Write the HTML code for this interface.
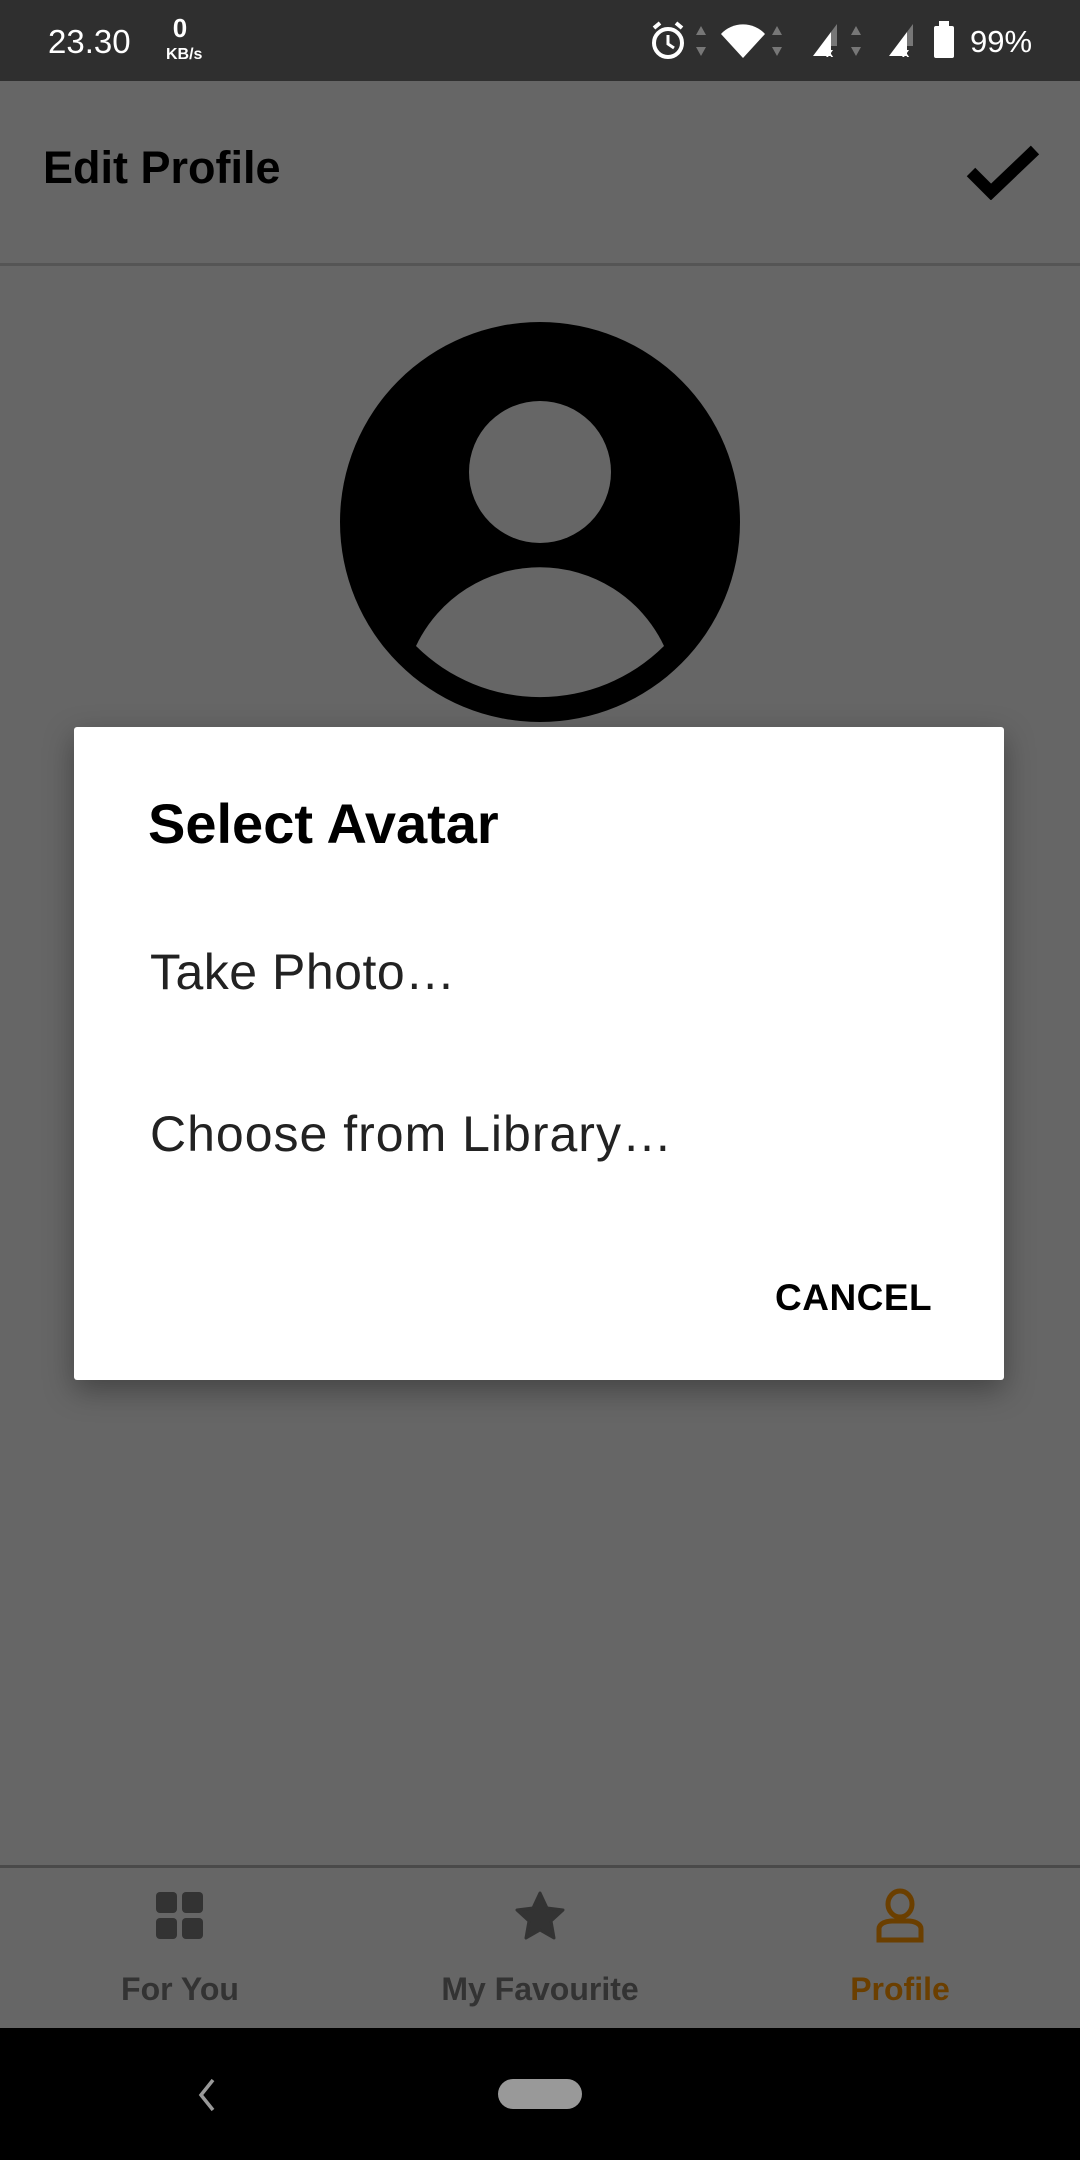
<!DOCTYPE html>
<html><head><meta charset="utf-8"><style>
*{margin:0;padding:0;box-sizing:border-box}
body{width:1080px;height:2160px;position:relative;background:#666;font-family:"Liberation Sans",sans-serif;overflow:hidden}
.abs{position:absolute}
</style></head><body>
<div class="abs" style="left:0;top:0;width:1080px;height:81px;background:#2f2f2f"></div>
<div class="abs" style="left:48px;top:22px;color:#fff;font-size:33px;line-height:40px">23.30</div>
<div class="abs" style="left:168px;top:14px;color:#fff;font-size:26px;font-weight:bold;line-height:28px;width:24px;text-align:center">0</div>
<div class="abs" style="left:166px;top:46px;color:#fff;font-size:16px;font-weight:bold;line-height:18px">KB/s</div>
<svg class="abs" style="left:645px;top:18px" width="400" height="46" viewBox="0 0 400 46">
 <circle cx="23" cy="25" r="14" fill="none" stroke="#fff" stroke-width="4"/>
 <path d="M23 17v9l6 4" stroke="#fff" stroke-width="3" fill="none"/>
 <path d="M9 10l6-5M37 10l-6-5" stroke="#fff" stroke-width="4"/>
 <path d="M56 8l-5 9h10zM56 38l-5-9h10z" fill="#777"/>
 <path d="M98 40L76 16a30 30 0 0 1 44 0z" fill="#fff"/>
 <path d="M132 8l-5 9h10zM132 38l-5-9h10z" fill="#777"/>
 <path d="M168 38L186 14v24z" fill="#fff"/><path d="M186 14v14h6V6z" fill="#777"/>
 <text x="181" y="39" fill="#fff" font-size="13" font-weight="bold" font-family="Liberation Sans">x</text>
 <path d="M211 8l-5 9h10zM211 38l-5-9h10z" fill="#777"/>
 <path d="M244 38L262 14v24z" fill="#fff"/><path d="M262 14v14h6V6z" fill="#777"/>
 <text x="257" y="39" fill="#fff" font-size="13" font-weight="bold" font-family="Liberation Sans">x</text>
 <rect x="289" y="8" width="20" height="32" rx="2" fill="#fff"/><rect x="294" y="3" width="10" height="6" fill="#fff"/>
</svg>
<div class="abs" style="left:970px;top:22px;color:#fff;font-size:31px;line-height:40px">99%</div>

<div class="abs" style="left:43px;top:140px;font-size:45px;font-weight:bold;color:#000;line-height:56px">Edit Profile</div>
<svg class="abs" style="left:965px;top:144px" width="76" height="56" viewBox="0 0 76 56"><path d="M6 28l20 20L70 6" stroke="#000" stroke-width="12" fill="none" stroke-linejoin="miter"/></svg>
<div class="abs" style="left:0;top:263px;width:1080px;height:3px;background:#555"></div>

<svg class="abs" style="left:338px;top:320px" width="404" height="404" viewBox="0 0 404 404">
 <circle cx="202" cy="202" r="200" fill="#000"/>
 <circle cx="202" cy="152" r="71" fill="#666"/>
 <path d="M78 326a137 137 0 0 1 248 0a176 176 0 0 1-248 0z" fill="#666"/>
</svg>

<div class="abs" style="left:74px;top:727px;width:930px;height:653px;background:#fff;border-radius:3px;box-shadow:0 10px 30px rgba(0,0,0,.35)"></div>
<div class="abs" style="left:148px;top:792px;font-size:56px;font-weight:bold;color:#000;line-height:64px">Select Avatar</div>
<div class="abs" style="left:150px;top:943px;font-size:50px;color:#222;line-height:58px;letter-spacing:0.5px">Take Photo…</div>
<div class="abs" style="left:150px;top:1105px;font-size:50px;color:#222;line-height:58px;letter-spacing:1px">Choose from Library…</div>
<div class="abs" style="left:775px;top:1276px;font-size:37px;font-weight:bold;color:#000;line-height:44px;letter-spacing:0.5px">CANCEL</div>

<div class="abs" style="left:0;top:1865px;width:1080px;height:3px;background:#4a4a4a"></div>
<svg class="abs" style="left:155px;top:1891px" width="50" height="50" viewBox="0 0 50 50"><g fill="#333"><rect x="1" y="1" width="21" height="21" rx="4"/><rect x="27" y="1" width="21" height="21" rx="4"/><rect x="1" y="27" width="21" height="21" rx="4"/><rect x="27" y="27" width="21" height="21" rx="4"/></g></svg>
<svg class="abs" style="left:514px;top:1891px" width="52" height="50" viewBox="0 0 52 50"><path d="M26 2l7 15 16 2-12 11 3 17-14-8-14 8 3-17L3 19l16-2z" fill="#333" stroke="#333" stroke-width="3" stroke-linejoin="round"/></svg>
<svg class="abs" style="left:875px;top:1888px" width="50" height="56" viewBox="0 0 50 56"><g fill="none" stroke="#6b3f00" stroke-width="5"><ellipse cx="25" cy="16" rx="12" ry="13"/><path d="M4 52V41c0-6 8-8 13-8h16c5 0 13 2 13 8v11z"/></g></svg>
<div class="abs" style="left:80px;top:1970px;width:200px;text-align:center;font-size:32px;font-weight:bold;color:#333;line-height:38px">For You</div>
<div class="abs" style="left:390px;top:1970px;width:300px;text-align:center;font-size:32px;font-weight:bold;color:#333;line-height:38px">My Favourite</div>
<div class="abs" style="left:800px;top:1970px;width:200px;text-align:center;font-size:32px;font-weight:bold;color:#6b3f00;line-height:38px">Profile</div>

<div class="abs" style="left:0;top:2028px;width:1080px;height:132px;background:#000"></div>
<svg class="abs" style="left:196px;top:2078px" width="22" height="34" viewBox="0 0 22 34"><path d="M17 2L5 17l12 15" stroke="#999" stroke-width="3.5" fill="none"/></svg>
<div class="abs" style="left:498px;top:2079px;width:84px;height:30px;border-radius:15px;background:#999"></div>
</body></html>
